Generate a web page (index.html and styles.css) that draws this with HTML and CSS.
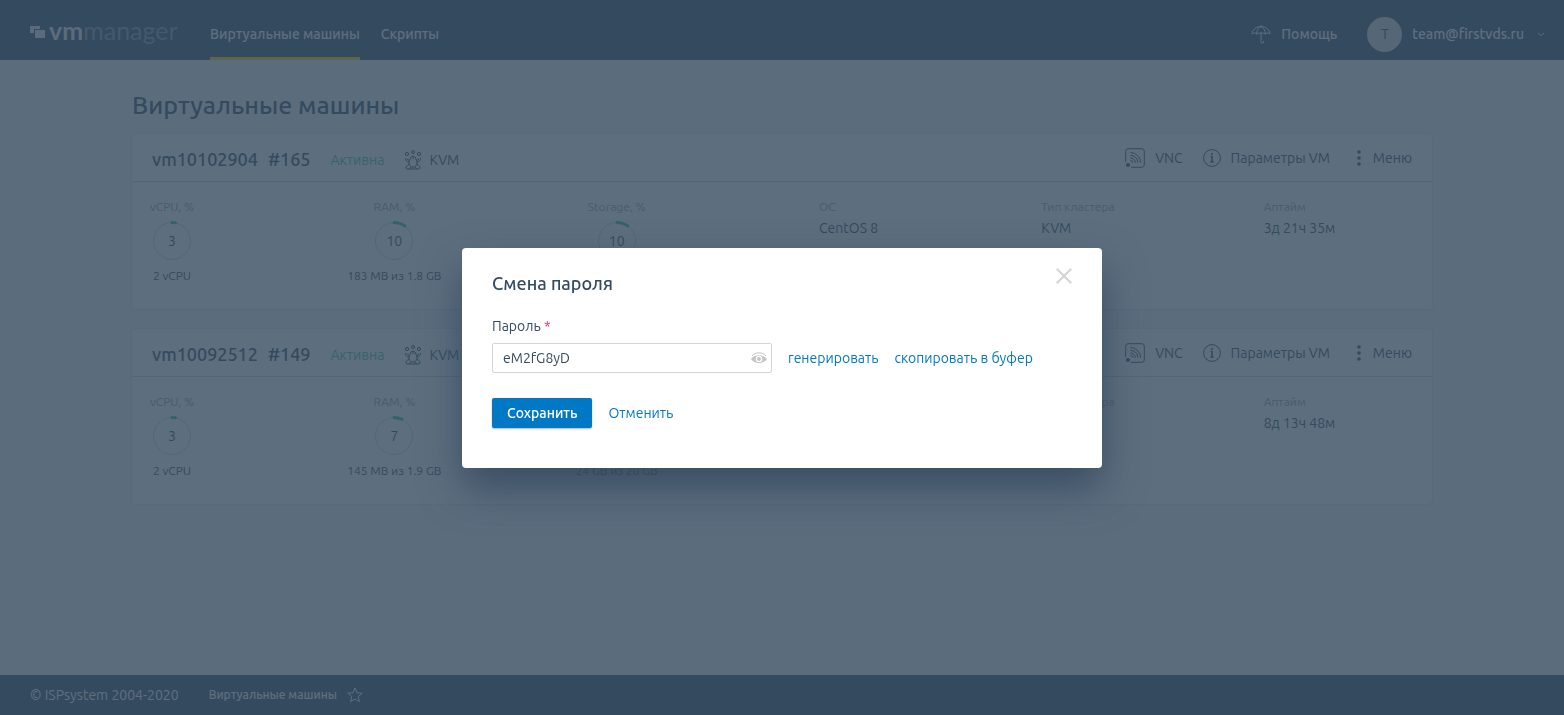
FILE: index.html
```html
<!DOCTYPE html>
<html lang="ru">
<head>
<meta charset="utf-8">
<meta name="viewport" content="width=device-width, initial-scale=1">
<title>VMmanager</title>
<link rel="stylesheet" href="styles.css">
</head>
<body>
<svg class="sprite" aria-hidden="true">
  <symbol id="i-kvm" viewBox="0 0 18 20">
    <circle cx="9" cy="2" r="1.500"/><circle cx="3" cy="4" r="1.600"/><circle cx="15" cy="4" r="1.600"/>
    <path d="M6.200 9C6.200 5.400 11.800 5.400 11.800 9c2.200 3 1.600 8-2.800 8s-5-5-2.800-8zM1.500 8c0 2.500 1 3.700 3.700 4M16.500 8c0 2.500-1 3.700-3.700 4M3 9l2.500 1.500M15 9l-2.500 1.500M5 14.500c-2 .5-3 2-3 3.500 0 1.500 4.500 1.500 5-1M13 14.500c2 .5 3 2 3 3.500 0 1.500-4.500 1.500-5-1M5 19h8M8 8h2"/>
  </symbol>
  <symbol id="i-vnc" viewBox="0 0 20 20">
    <path d="M.7 14V3.200A2.500 2.500 0 0 1 3.200.7h13.600a2.500 2.500 0 0 1 2.500 2.500v13.600a2.500 2.500 0 0 1-2.500 2.500H6M5.500 4.500A10.500 10.500 0 0 1 15.700 14.800M5.500 7.300a7.700 7.700 0 0 1 7.500 7.500M5.500 9.900a5 5 0 0 1 4.900 4.900M5.500 12.200a3 3 0 0 1 2.500 2.600"/>
    <circle class="solid" cx="3" cy="17" r="2"/>
  </symbol>
  <symbol id="i-info" viewBox="0 0 18 18">
    <circle cx="9" cy="9" r="8.400"/><path d="M7.500 7.500H9V13M7.300 13h3.400M9 4v2" stroke-width="1.500"/>
  </symbol>
  <symbol id="i-menu" viewBox="0 0 4 16">
    <circle class="solid" cx="2" cy="2" r="1.800"/><circle class="solid" cx="2" cy="8" r="1.800"/><circle class="solid" cx="2" cy="14" r="1.800"/>
  </symbol>
</svg>

<header class="topbar">
  <a class="logo" href="#">
    <svg class="logo-mark" viewBox="0 0 15 12" aria-hidden="true"><path d="M0 0h10v3H4v4H0zM5 4h10v8H5z"/></svg>
    <span class="logo-text"><b>vm</b><span class="logo-dim">manager</span></span>
  </a>
  <nav class="nav">
    <a class="nav-link active" href="#">Виртуальные машины</a>
    <a class="nav-link" href="#">Скрипты</a>
  </nav>
  <div class="account">
    <a class="help" href="#">
      <svg class="icon i20" viewBox="0 0 20 20" aria-hidden="true"><path d="M1 10a9 7.500 0 0 1 18 0c-1.500-1.500-3-1.500-4.500 0-1.500-1.500-7.500-1.500-9 0-1.500-1.500-3-1.500-4.500 0zM5.500 10c.3-4 2-6.500 4.500-7.500 2.500 1 4.200 3.500 4.500 7.500M10 1.300V2.500M10 9V18a1.300 1.300 0 0 0 2.600 0v-1"/></svg>
      Помощь
    </a>
    <button class="user" type="button">
      <span class="avatar">T</span>
      team@firstvds.ru
      <svg class="icon chevron" viewBox="0 0 8 5" aria-hidden="true"><path d="M1 .8l3 3 3-3"/></svg>
    </button>
  </div>
</header>

<main class="page">
  <h1 class="title">Виртуальные машины</h1>

  <section class="card">
    <header class="card-head">
      <h2 class="vm-name">vm10102904 <span>#165</span></h2>
      <span class="status">Активна</span>
      <span class="virt"><svg class="icon kvm" aria-hidden="true"><use href="#i-kvm"/></svg>KVM</span>
      <div class="actions">
        <button class="action" type="button"><svg class="icon i20" aria-hidden="true"><use href="#i-vnc"/></svg>VNC</button>
        <button class="action" type="button"><svg class="icon i18" aria-hidden="true"><use href="#i-info"/></svg>Параметры VM</button>
        <button class="action menu" type="button"><svg class="icon dots" aria-hidden="true"><use href="#i-menu"/></svg>Меню</button>
      </div>
    </header>
    <div class="stats">
      <div class="gauge"><span class="label">vCPU, %</span>
        <span class="ring"><svg viewBox="0 0 40 40" aria-hidden="true"><circle class="track" cx="20" cy="20" r="18.500"/><circle class="arc" cx="20" cy="20" r="18.500" pathLength="100" stroke-dasharray="3 97"/></svg>3</span>
        <span class="amount">2 vCPU</span></div>
      <div class="gauge"><span class="label">RAM, %</span>
        <span class="ring"><svg viewBox="0 0 40 40" aria-hidden="true"><circle class="track" cx="20" cy="20" r="18.500"/><circle class="arc" cx="20" cy="20" r="18.500" pathLength="100" stroke-dasharray="10 90"/></svg>10</span>
        <span class="amount">183 MB из 1.8 GB</span></div>
      <div class="gauge"><span class="label">Storage, %</span>
        <span class="ring"><svg viewBox="0 0 40 40" aria-hidden="true"><circle class="track" cx="20" cy="20" r="18.500"/><circle class="arc" cx="20" cy="20" r="18.500" pathLength="100" stroke-dasharray="10 90"/></svg>10</span></div>
      <div class="fact"><span class="label">ОС</span><span class="value">CentOS 8</span></div>
      <div class="fact"><span class="label">Тип кластера</span><span class="value">KVM</span></div>
      <div class="fact"><span class="label">Аптайм</span><span class="value">3д 21ч 35м</span></div>
    </div>
  </section>

  <section class="card">
    <header class="card-head">
      <h2 class="vm-name">vm10092512 <span>#149</span></h2>
      <span class="status">Активна</span>
      <span class="virt"><svg class="icon kvm" aria-hidden="true"><use href="#i-kvm"/></svg>KVM</span>
      <div class="actions">
        <button class="action" type="button"><svg class="icon i20" aria-hidden="true"><use href="#i-vnc"/></svg>VNC</button>
        <button class="action" type="button"><svg class="icon i18" aria-hidden="true"><use href="#i-info"/></svg>Параметры VM</button>
        <button class="action menu" type="button"><svg class="icon dots" aria-hidden="true"><use href="#i-menu"/></svg>Меню</button>
      </div>
    </header>
    <div class="stats">
      <div class="gauge"><span class="label">vCPU, %</span>
        <span class="ring"><svg viewBox="0 0 40 40" aria-hidden="true"><circle class="track" cx="20" cy="20" r="18.500"/><circle class="arc" cx="20" cy="20" r="18.500" pathLength="100" stroke-dasharray="3 97"/></svg>3</span>
        <span class="amount">2 vCPU</span></div>
      <div class="gauge"><span class="label">RAM, %</span>
        <span class="ring"><svg viewBox="0 0 40 40" aria-hidden="true"><circle class="track" cx="20" cy="20" r="18.500"/><circle class="arc" cx="20" cy="20" r="18.500" pathLength="100" stroke-dasharray="7 93"/></svg>7</span>
        <span class="amount">145 MB из 1.9 GB</span></div>
      <div class="gauge"><span class="label"></span>
        <span class="ring"></span>
        <span class="amount">24 GB из 20 GB</span></div>
      <div class="fact"></div>
      <div class="fact"><span class="label">Тип кластера</span></div>
      <div class="fact"><span class="label">Аптайм</span><span class="value">8д 13ч 48м</span></div>
    </div>
  </section>
</main>

<footer class="footer">
  <span>© ISPsystem 2004-2020</span>
  <a class="crumb" href="#">Виртуальные машины
    <svg class="icon star" viewBox="0 0 16 16" aria-hidden="true"><path d="M8 1l2 4.800 5.200.4-4 3.400 1.300 5.100L8 12l-4.500 2.700 1.300-5.100-4-3.400 5.200-.4z"/></svg>
  </a>
</footer>

<div class="overlay">
  <form class="modal" role="dialog" aria-labelledby="dlg-title">
    <div class="modal-head">
      <h2 class="modal-title" id="dlg-title">Смена пароля</h2>
      <button class="close" type="button" aria-label="Закрыть"><svg viewBox="0 0 16 16" aria-hidden="true"><path d="M.7.7l14.600 14.600M15.300.7L.7 15.300"/></svg></button>
    </div>
    <label class="field-label" for="password">Пароль <span class="required">*</span></label>
    <div class="field-row">
      <div class="field">
        <input class="input" id="password" type="text" value="eM2fG8yD">
        <button class="eye" type="button" aria-label="Показать пароль"><svg viewBox="0 0 16 12" aria-hidden="true"><path class="brow" d="M1 4C4-.2 12-.2 15 4"/><path fill-rule="evenodd" d="M0 7c3.500-5 12.500-5 16 0-3.500 5.500-12.500 5.500-16 0zm8-3.300a3.300 3.300 0 1 0 0 6.600 3.300 3.300 0 0 0 0-6.600z"/><circle cx="8" cy="7" r="2"/></svg></button>
      </div>
      <button class="link" type="button">генерировать</button>
      <button class="link" type="button">скопировать в буфер</button>
    </div>
    <div class="buttons">
      <button class="primary" type="submit">Сохранить</button>
      <button class="link" type="button">Отменить</button>
    </div>
  </form>
</div>
</body>
</html>
```
FILE: styles.css
```css
* { box-sizing: border-box; }

body {
  margin: 0;
  min-height: 100vh;
  display: flex;
  flex-direction: column;
  background: #f3f5f8;
  color: #344a5e;
  font: 14px/20px Ubuntu, "Noto Sans", sans-serif;
}

a { color: inherit; text-decoration: none; }

button {
  padding: 0;
  border: 0;
  background: none;
  color: inherit;
  font: inherit;
  cursor: pointer;
}

.sprite { display: none; }

.icon {
  flex: none;
  fill: none;
  stroke: currentColor;
  stroke-width: 1;
  overflow: visible;
}
.solid { fill: currentColor; stroke: none; }
.i20 { width: 20px; height: 20px; }
.i18 { width: 18px; height: 18px; }
.kvm { width: 18px; height: 20px; }
.dots { width: 4px; height: 16px; }
.star { width: 16px; height: 16px; }
.chevron { width: 8px; height: 5px; margin-left: 3px; }

.topbar {
  display: flex;
  height: 60px;
  padding: 0 19px 0 30px;
  background: #344a5e;
  color: #fff;
}

.logo {
  display: flex;
  align-items: center;
  gap: 4px;
  width: 180px;
  padding-top: 4px;
  color: #f0f3f6;
}
.logo-mark { width: 15px; height: 12px; fill: currentColor; }
.logo-text { font: 25px/30px Lato, sans-serif; padding-bottom: 4px; }
.logo-dim { color: #8495ad; }

.nav { display: flex; gap: 21px; }
.nav-link {
  display: flex;
  align-items: center;
  padding-top: 10px;
  border-bottom: 3px solid transparent;
  font-weight: 500;
}
.nav-link.active { border-color: #f4d700; }

.account {
  display: flex;
  align-items: center;
  gap: 30px;
  margin-left: auto;
  padding-top: 8px;
  font-weight: 500;
}
.help, .user { display: flex; align-items: center; gap: 10px; }
.avatar {
  width: 35px;
  height: 35px;
  border-radius: 50%;
  background: #d4d4d4;
  color: #344a5e;
  font-weight: 400;
  line-height: 35px;
  text-align: center;
}

.page {
  flex: 1;
  width: 100%;
  max-width: 1340px;
  margin: 0 auto;
  padding: 30px 20px;
}
.title { margin: 0 0 14px; font-size: 25px; line-height: 30px; font-weight: 500; }

.card {
  margin-bottom: 20px;
  border-radius: 4px;
  background: #fff;
  box-shadow: 0 0 3px rgba(52, 74, 94, .2);
}
.card-head {
  display: flex;
  align-items: center;
  height: 48px;
  padding: 2px 20px 0;
  border-bottom: 1px solid #ccd3da;
}
.vm-name {
  display: flex;
  gap: 10px;
  margin: 0 20px 0 0;
  font-size: 18px;
  line-height: 20px;
  font-weight: 500;
}
.status, .virt { padding-top: 2px; }
.status { margin-right: 20px; color: #46c6a0; }
.virt { display: flex; align-items: center; gap: 7px; }
.actions { display: flex; gap: 20px; margin-left: auto; padding-bottom: 1px; }
.action { display: flex; align-items: center; gap: 10px; }
.menu { padding-left: 7px; gap: 12px; }

.stats {
  display: grid;
  grid-template-columns: repeat(6, 1fr);
  gap: 74px;
  padding: 15px 20px 23px;
}
.gauge {
  display: flex;
  flex-direction: column;
  align-items: center;
  width: 40px;
  white-space: nowrap;
}
.label { min-height: 20px; font-size: 12px; color: #a0a0a0; }
.amount { margin-top: 5px; font-size: 12px; }
.ring {
  position: relative;
  width: 40px;
  height: 40px;
  margin-top: 4px;
  line-height: 40px;
  text-align: center;
}
.ring svg { position: absolute; inset: 0; overflow: visible; }
.track, .arc { fill: none; }
.track { stroke: #ccd3da; stroke-width: 1; }
.arc {
  stroke: #2ec090;
  stroke-width: 3;
  stroke-linecap: round;
  transform: rotate(-90deg);
  transform-origin: center;
}
.fact { display: flex; flex-direction: column; gap: 1px; white-space: nowrap; }

.footer {
  display: flex;
  align-items: center;
  gap: 30px;
  height: 40px;
  padding: 0 30px;
  background: #344a5e;
  color: #fff;
}
.crumb { display: flex; align-items: center; gap: 10px; font-size: 12px; font-weight: 500; }

.overlay {
  position: fixed;
  inset: 0;
  display: flex;
  align-items: center;
  justify-content: center;
  background: rgba(52, 74, 94, .8);
}
.modal {
  width: 640px;
  max-width: 100%;
  padding: 20px 30px 40px;
  border-radius: 4px;
  background: #fff;
  box-shadow: 0 20px 40px rgba(48, 70, 94, .8);
}
.modal-head { display: flex; justify-content: space-between; margin-bottom: 18px; }
.modal-title { margin: 0; padding-top: 5px; font-size: 18px; line-height: 20px; font-weight: 500; }
.close { width: 16px; height: 16px; }
.close svg { display: block; width: 16px; height: 16px; fill: none; stroke: #d4d4d4; stroke-width: 2; overflow: visible; }

.field-label { display: block; margin-bottom: 2px; line-height: 30px; }
.required { color: #e8306f; }
.field-row, .buttons { display: flex; align-items: center; gap: 16px; }
.field { position: relative; width: 280px; }
.input {
  display: block;
  width: 100%;
  height: 30px;
  padding: 0 34px 0 10px;
  border: 1px solid #d4d4d4;
  border-radius: 2px;
  color: inherit;
  font: inherit;
}
.eye { position: absolute; top: 9px; right: 5px; }
.eye svg { display: block; width: 16px; height: 12px; fill: #c4c4c4; }
.eye .brow { fill: none; stroke: #c4c4c4; }
.link { color: #0078c3; }
.buttons { margin-top: 25px; }
.primary {
  height: 30px;
  padding: 0 15px;
  border-radius: 2px;
  background: #0078c3;
  color: #fff;
  font-weight: 500;
  box-shadow: 0 1px 2px rgba(0, 0, 0, .3);
}
```
